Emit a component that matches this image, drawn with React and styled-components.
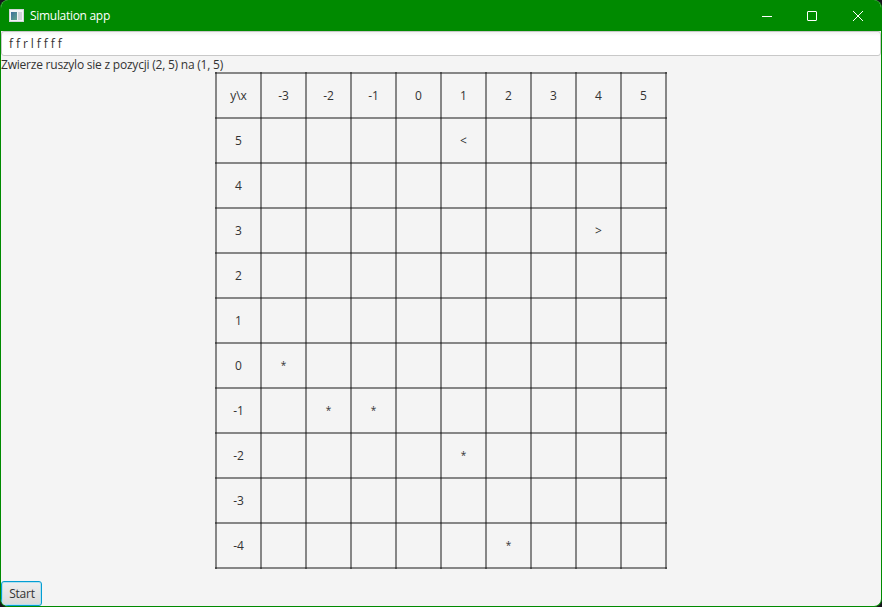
import React from 'react';
import styled, { createGlobalStyle } from 'styled-components';

const GlobalStyle = createGlobalStyle`
  body { margin: 0; background: #16161c; overflow: hidden; }
  * { box-sizing: border-box; }
`;

const Window = styled.div`
  width: 882px;
  height: 607px;
  display: flex;
  flex-direction: column;
  border: 1px solid #008a00;
  border-top: 0;
  border-radius: 8px;
  overflow: hidden;
  background: #f4f4f4;
  color: #333;
  font: 12px/16px 'Open Sans', 'Noto Sans', sans-serif;
`;

const TitleBar = styled.header`
  height: 31px;
  flex: none;
  display: flex;
  align-items: center;
  padding-left: 8px;
  background: #008a00;
  color: #fff;
`;

const Label = styled.span`
  display: inline-block;
  white-space: pre;
  letter-spacing: ${(p) => p.$spacing || 0}px;
`;

const Title = styled(Label)`
  margin-left: 6px;
  flex: 1;
`;

const WindowButton = styled.button`
  width: 46px;
  height: 31px;
  padding: 0;
  border: 0;
  background: transparent;
  display: flex;
  align-items: center;
  justify-content: center;
`;

const Controls = styled.div`
  display: flex;
`;

const CommandField = styled.div`
  height: 25px;
  flex: none;
  padding: 4px 7px;
  border: 1px solid #c8c8c8;
  border-radius: 3px;
  background: linear-gradient(#f3f3f3, #fff 4px);
`;

const Status = styled.div`
  height: 16px;
  flex: none;
  line-height: 18px;
`;

const Board = styled.div`
  flex: none;
  align-self: center;
  width: 452px;
  height: 497px;
  display: grid;
  grid-template-columns: repeat(10, 45px);
  grid-template-rows: repeat(11, 45px);
  padding: 1px;
  background:
    linear-gradient(90deg, rgba(0, 0, 0, 0.45) 2px, transparent 2px) 0 0 / 45px 45px,
    linear-gradient(rgba(0, 0, 0, 0.45) 2px, transparent 2px) 0 0 / 45px 45px;
`;

const Cell = styled.div`
  display: flex;
  align-items: center;
  justify-content: center;
`;

const Grass = styled(Cell)`
  font-size: 10px;
  padding-bottom: 2px;
`;

const Footer = styled.footer`
  margin-top: auto;
  display: flex;
`;

const StartButton = styled.button`
  width: 41px;
  height: 25px;
  padding: 0 0 0 1px;
  border: 1px solid #039ed3;
  border-radius: 3px;
  box-shadow: inset 0 0 0 1px #b5dfee;
  background: linear-gradient(#efefef, #d9d9d9);
  color: #333;
  font: inherit;
  letter-spacing: -0.2px;
`;

const columns = [-3, -2, -1, 0, 1, 2, 3, 4, 5];
const rows = [5, 4, 3, 2, 1, 0, -1, -2, -3, -4];
const objects = {
  '1,5': '<',
  '4,3': '>',
  '-3,0': '*',
  '-2,-1': '*',
  '-1,-1': '*',
  '1,-2': '*',
  '2,-4': '*',
};

function AppIcon() {
  return (
    <svg width="15" height="13" viewBox="0 0 15 13">
      <defs>
        <linearGradient id="pane" x1="0" y1="0" x2="1" y2="1">
          <stop offset="0" stopColor="#3d6f9c" />
          <stop offset="1" stopColor="#63a58b" />
        </linearGradient>
      </defs>
      <rect width="15" height="13" fill="#d2d6da" />
      <rect x="1" y="1" width="13" height="11" fill="#f3f4f5" />
      <rect x="2" y="3" width="6" height="8" fill="url(#pane)" />
      <rect x="9" y="3" width="4" height="8" fill="#cfd4d8" />
    </svg>
  );
}

function MapCell({ x, y }) {
  const object = objects[`${x},${y}`];
  return object === '*' ? <Grass>*</Grass> : <Cell>{object}</Cell>;
}

export default function App() {
  return (
    <>
      <GlobalStyle />
      <Window>
        <TitleBar>
          <AppIcon />
          <Title $spacing={-0.3}>Simulation app</Title>
          <Controls>
            <WindowButton aria-label="Minimize">
              <svg width="12" height="10"><path d="M2 5.5H12" stroke="#fff" /></svg>
            </WindowButton>
            <WindowButton aria-label="Maximize">
              <svg width="10" height="10"><rect x=".5" y=".5" width="9" height="9" rx=".5" fill="none" stroke="#fff" /></svg>
            </WindowButton>
            <WindowButton aria-label="Close">
              <svg width="10" height="10"><path d="M0 0L10 10M10 0L0 10" stroke="#fff" /></svg>
            </WindowButton>
          </Controls>
        </TitleBar>
        <CommandField><Label $spacing={-0.08}>f f r l f f f f</Label></CommandField>
        <Status><Label $spacing={-0.22}>Zwierze ruszylo sie z pozycji (2, 5) na (1, 5)</Label></Status>
        <Board>
          <Cell>{'y\\x'}</Cell>
          {columns.map((x) => <Cell key={x}>{x}</Cell>)}
          {rows.map((y) => (
            <React.Fragment key={y}>
              <Cell>{y}</Cell>
              {columns.map((x) => <MapCell key={x} x={x} y={y} />)}
            </React.Fragment>
          ))}
        </Board>
        <Footer><StartButton>Start</StartButton></Footer>
      </Window>
    </>
  );
}
